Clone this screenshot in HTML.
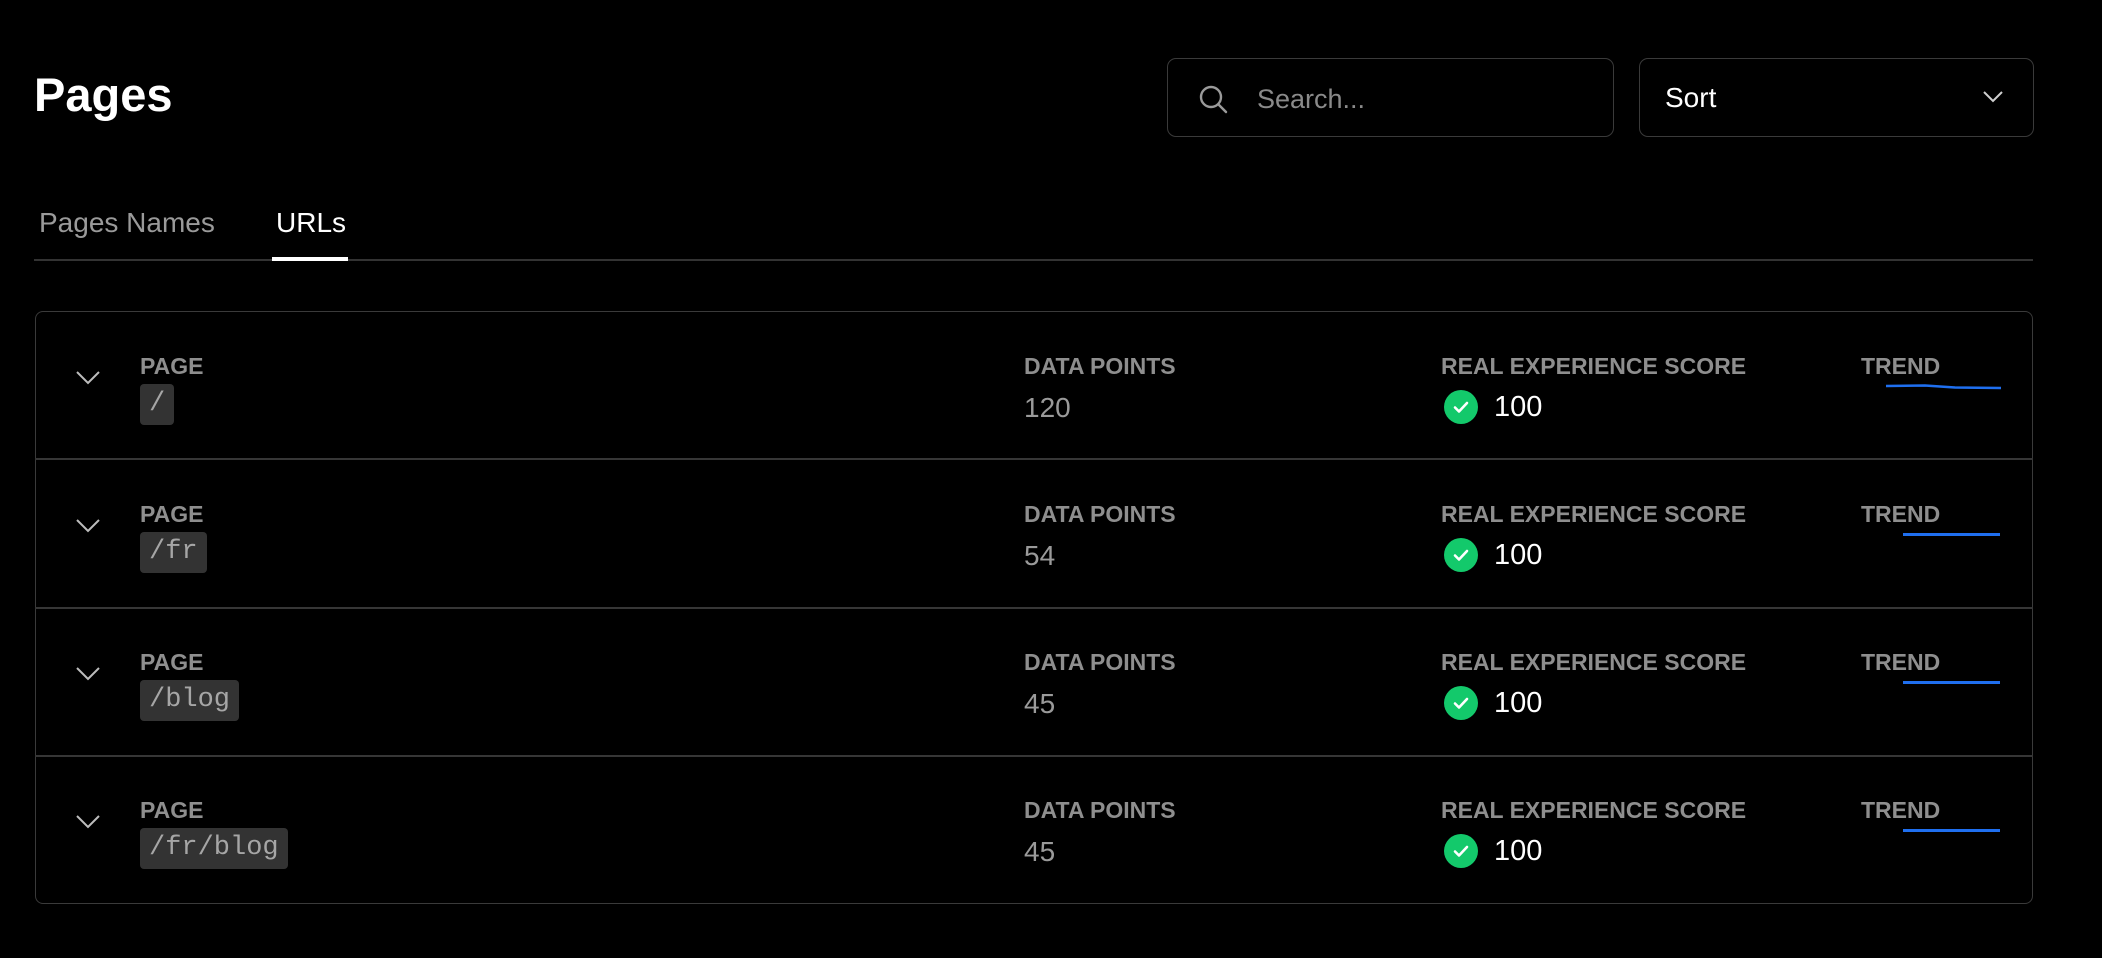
<!DOCTYPE html>
<html><head><meta charset="utf-8">
<style>
*{margin:0;padding:0;box-sizing:border-box}
html,body{width:2102px;height:958px;background:#000;overflow:hidden;font-family:"Liberation Sans",Arial,sans-serif}
.a{position:absolute;line-height:1;white-space:nowrap}
.title{left:34px;top:71px;font-size:47px;font-weight:bold;color:#fff}
.box{position:absolute;top:58px;height:79px;border:1.5px solid #3a3a3a;border-radius:9px}
.tab{top:209px;font-size:28px}
.tbl{position:absolute;left:35px;top:311px;width:1998px;height:593px;border:1.5px solid #3a3a3a;border-radius:8px}
.sep{position:absolute;left:35px;width:1998px;height:2px;background:#363636}
.lbl{font-size:23px;font-weight:bold;color:#8e8e8e}
.val{font-size:28px;color:#9a9a9a}
.badge{position:absolute;left:140px;height:41px;background:#333;border-radius:4px;color:#a6a6a6;font-family:"Liberation Mono",monospace;font-size:27px;line-height:41px;padding:0 9px}
.chk{position:absolute;left:1444px;width:34px;height:34px;border-radius:50%;background:#13c96b}
.num{font-size:29px;color:#fff}
.trend{position:absolute;height:3px;background:#1f6fef}
</style></head><body>
<div class="a title">Pages</div>

<div class="box" style="left:1167px;width:447px">
  <svg style="position:absolute;left:30px;top:25px" width="32" height="32" viewBox="0 0 32 32"><circle cx="13" cy="13" r="10" fill="none" stroke="#9a9a9a" stroke-width="2.4"/><path d="M20.5 20.5 L28 28" stroke="#9a9a9a" stroke-width="2.4" stroke-linecap="round"/></svg>
  <div class="a" style="left:89px;top:27px;font-size:27px;color:#8a8a8a">Search...</div>
</div>
<div class="box" style="left:1639px;width:395px">
  <div class="a" style="left:25px;top:25px;font-size:28px;color:#fff">Sort</div>
  <svg style="position:absolute;left:342px;top:31px" width="22" height="14" viewBox="0 0 22 14"><path d="M2 2 L11 11 L20 2" fill="none" stroke="#cfcfcf" stroke-width="2"/></svg>
</div>

<div class="a tab" style="left:39px;color:#9a9a9a">Pages Names</div>
<div class="a tab" style="left:276px;color:#fff">URLs</div>
<div style="position:absolute;left:34px;top:259px;width:1999px;height:2px;background:#333"></div>
<div style="position:absolute;left:272px;top:257px;width:76px;height:4px;background:#fff"></div>

<div class="tbl"></div>
<div class="sep" style="top:458px"></div>
<div class="sep" style="top:607px"></div>
<div class="sep" style="top:755px"></div>

<div style="position:absolute;left:0;top:311px;width:2102px;height:148px">
  <svg style="position:absolute;left:75px;top:59px" width="26" height="15" viewBox="0 0 26 15"><path d="M2 2 L13 13 L24 2" fill="none" stroke="#bdbdbd" stroke-width="2"/></svg>
  <div class="a lbl" style="left:140px;top:44px">PAGE</div>
  <div class="badge" style="top:73px">/</div>
  <div class="a lbl" style="left:1024px;top:44px">DATA POINTS</div>
  <div class="a val" style="left:1024px;top:83px">120</div>
  <div class="a lbl" style="left:1441px;top:44px">REAL EXPERIENCE SCORE</div>
  <div class="chk" style="top:79px"><svg width="34" height="34" viewBox="0 0 34 34"><path d="M11 17.5 L15 21.5 L23 13" fill="none" stroke="#fff" stroke-width="2.6" stroke-linecap="round" stroke-linejoin="round"/></svg></div>
  <div class="a num" style="left:1494px;top:82px">100</div>
  <div class="a lbl" style="left:1861px;top:44px">TREND</div>
  <svg style="position:absolute;left:1885px;top:72px" width="118" height="8" viewBox="0 0 118 8"><path d="M1 3 L40 2.5 L70 4.5 L116 5" fill="none" stroke="#1f6fef" stroke-width="2.6"/></svg>
</div>

<div style="position:absolute;left:0;top:459px;width:2102px;height:148px">
  <svg style="position:absolute;left:75px;top:59px" width="26" height="15" viewBox="0 0 26 15"><path d="M2 2 L13 13 L24 2" fill="none" stroke="#bdbdbd" stroke-width="2"/></svg>
  <div class="a lbl" style="left:140px;top:44px">PAGE</div>
  <div class="badge" style="top:73px">/fr</div>
  <div class="a lbl" style="left:1024px;top:44px">DATA POINTS</div>
  <div class="a val" style="left:1024px;top:83px">54</div>
  <div class="a lbl" style="left:1441px;top:44px">REAL EXPERIENCE SCORE</div>
  <div class="chk" style="top:79px"><svg width="34" height="34" viewBox="0 0 34 34"><path d="M11 17.5 L15 21.5 L23 13" fill="none" stroke="#fff" stroke-width="2.6" stroke-linecap="round" stroke-linejoin="round"/></svg></div>
  <div class="a num" style="left:1494px;top:82px">100</div>
  <div class="a lbl" style="left:1861px;top:44px">TREND</div>
  <div class="trend" style="left:1903px;top:74px;width:97px"></div>
</div>

<div style="position:absolute;left:0;top:607px;width:2102px;height:148px">
  <svg style="position:absolute;left:75px;top:59px" width="26" height="15" viewBox="0 0 26 15"><path d="M2 2 L13 13 L24 2" fill="none" stroke="#bdbdbd" stroke-width="2"/></svg>
  <div class="a lbl" style="left:140px;top:44px">PAGE</div>
  <div class="badge" style="top:73px">/blog</div>
  <div class="a lbl" style="left:1024px;top:44px">DATA POINTS</div>
  <div class="a val" style="left:1024px;top:83px">45</div>
  <div class="a lbl" style="left:1441px;top:44px">REAL EXPERIENCE SCORE</div>
  <div class="chk" style="top:79px"><svg width="34" height="34" viewBox="0 0 34 34"><path d="M11 17.5 L15 21.5 L23 13" fill="none" stroke="#fff" stroke-width="2.6" stroke-linecap="round" stroke-linejoin="round"/></svg></div>
  <div class="a num" style="left:1494px;top:82px">100</div>
  <div class="a lbl" style="left:1861px;top:44px">TREND</div>
  <div class="trend" style="left:1903px;top:74px;width:97px"></div>
</div>

<div style="position:absolute;left:0;top:755px;width:2102px;height:148px">
  <svg style="position:absolute;left:75px;top:59px" width="26" height="15" viewBox="0 0 26 15"><path d="M2 2 L13 13 L24 2" fill="none" stroke="#bdbdbd" stroke-width="2"/></svg>
  <div class="a lbl" style="left:140px;top:44px">PAGE</div>
  <div class="badge" style="top:73px">/fr/blog</div>
  <div class="a lbl" style="left:1024px;top:44px">DATA POINTS</div>
  <div class="a val" style="left:1024px;top:83px">45</div>
  <div class="a lbl" style="left:1441px;top:44px">REAL EXPERIENCE SCORE</div>
  <div class="chk" style="top:79px"><svg width="34" height="34" viewBox="0 0 34 34"><path d="M11 17.5 L15 21.5 L23 13" fill="none" stroke="#fff" stroke-width="2.6" stroke-linecap="round" stroke-linejoin="round"/></svg></div>
  <div class="a num" style="left:1494px;top:82px">100</div>
  <div class="a lbl" style="left:1861px;top:44px">TREND</div>
  <div class="trend" style="left:1903px;top:74px;width:97px"></div>
</div>
</body></html>
